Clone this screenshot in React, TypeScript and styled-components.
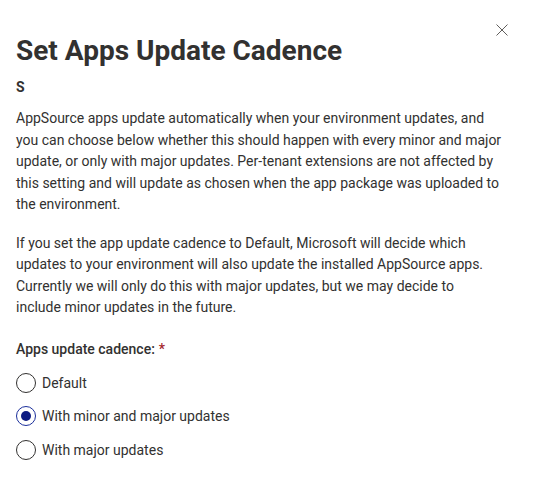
import styled, { createGlobalStyle } from "styled-components";

const GlobalStyle = createGlobalStyle`
  body {
    margin: 0;
    background: #fff;
    font-family: Roboto, "Liberation Sans", Arial, sans-serif;
    color: #323130;
  }
`;

const Panel = styled.div`
  width: 540px;
  height: 478px;
  box-sizing: border-box;
  padding: 18px 38px 0 16px;
  background: #fff;
`;

const Header = styled.div`
  display: flex;
  justify-content: space-between;
  align-items: flex-start;
`;

const Title = styled.h1`
  margin: 15px 0 0;
  font-size: 28px;
  line-height: 36px;
  font-weight: 700;
  color: #323130;
`;

const CloseButton = styled.button`
  width: 24px;
  height: 24px;
  margin-right: -12px;
  padding: 0;
  border: none;
  background: transparent;
  display: flex;
  align-items: center;
  justify-content: center;
  cursor: pointer;
  color: #605e5c;
`;

const Subtitle = styled.div`
  margin-top: 8px;
  font-size: 14px;
  line-height: 21px;
  font-weight: 700;
`;

const Paragraph = styled.p<{ $gap: number }>`
  margin: ${(p) => p.$gap}px 0 0;
  font-size: 14px;
  line-height: 21.5px;
`;

const FieldLabel = styled.div`
  margin-top: 20px;
  font-size: 14px;
  line-height: 21px;
  font-weight: 500;
`;

const Required = styled.span`
  color: #a4262c;
  padding-left: 4px;
`;

const OptionList = styled.div`
  display: flex;
  flex-direction: column;
  gap: 13.5px;
  padding-top: 13px;
`;

const Option = styled.label`
  display: flex;
  align-items: center;
  gap: 6px;
  height: 20px;
  font-size: 14px;
  cursor: pointer;
`;

const Circle = styled.span<{ $checked: boolean }>`
  width: 20px;
  height: 20px;
  box-sizing: border-box;
  border-radius: 50%;
  border: 1px solid ${(p) => (p.$checked ? "#1b2f9b" : "#323130")};
  display: flex;
  align-items: center;
  justify-content: center;

  &::after {
    content: "";
    width: 10px;
    height: 10px;
    border-radius: 50%;
    background: #0d1b82;
    display: ${(p) => (p.$checked ? "block" : "none")};
  }
`;

const options = ["Default", "With minor and major updates", "With major updates"];

export default function App() {
  const selected = 1;
  return (
    <Panel>
      <GlobalStyle />
      <Header>
        <Title>Set Apps Update Cadence</Title>
        <CloseButton aria-label="Close">
          <svg width="12" height="12" viewBox="0 0 12 12">
            <path d="M0.5 0.5 L11.5 11.5 M11.5 0.5 L0.5 11.5" stroke="currentColor" strokeWidth="1" fill="none" />
          </svg>
        </CloseButton>
      </Header>
      <Subtitle>S</Subtitle>
      <Paragraph $gap={10}>
        AppSource apps update automatically when your environment updates, and you can choose below whether this
        should happen with every minor and major update, or only with major updates. Per-tenant extensions are not
        affected by this setting and will update as chosen when the app package was uploaded to the environment.
      </Paragraph>
      <Paragraph $gap={17}>
        If you set the app update cadence to Default, Microsoft will decide which updates to your environment will
        also update the installed AppSource apps. Currently we will only do this with major updates, but we may
        decide to include minor updates in the future.
      </Paragraph>
      <FieldLabel>
        Apps update cadence:<Required>*</Required>
      </FieldLabel>
      <OptionList role="radiogroup">
        {options.map((o, i) => (
          <Option key={o}>
            <Circle $checked={i === selected} />
            {o}
          </Option>
        ))}
      </OptionList>
    </Panel>
  );
}
